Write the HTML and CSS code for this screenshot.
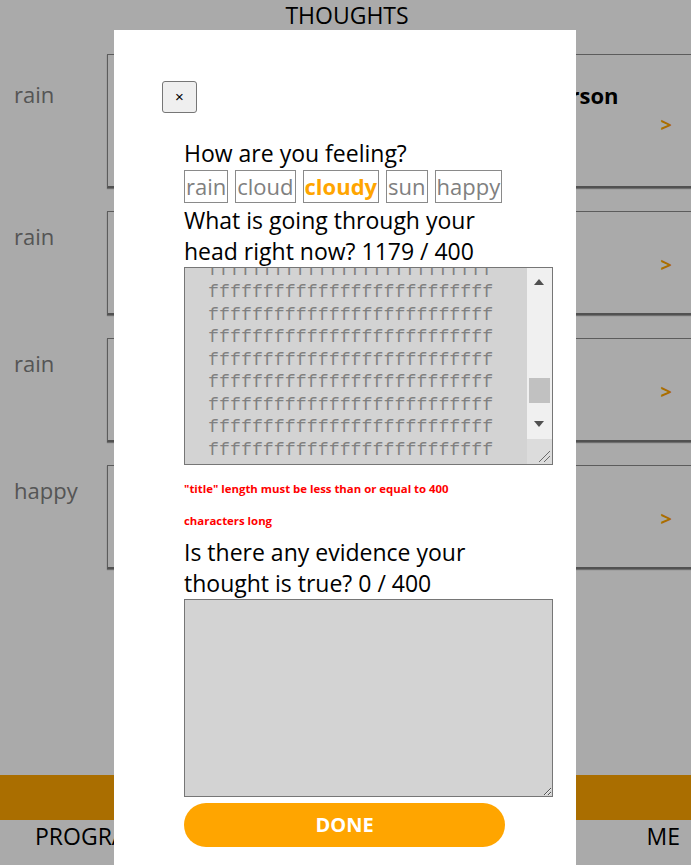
FILE: index.html
```html
<!DOCTYPE html>
<html lang="en">
<head>
<meta charset="utf-8">
<title>Thoughts</title>
<link rel="stylesheet" href="styles.css">
</head>
<body>
<div class="app">
  <header class="page-title">THOUGHTS</header>
  <main class="list">
    <div class="row row-first">
      <span class="mood">rain</span>
      <div class="card card-tall">
        <div class="card-body"><span class="card-title">Talking to a new person</span></div>
        <span class="chev">&gt;</span>
      </div>
    </div>
    <div class="row">
      <span class="mood">rain</span>
      <div class="card">
        <div class="card-body"></div>
        <span class="chev">&gt;</span>
      </div>
    </div>
    <div class="row">
      <span class="mood">rain</span>
      <div class="card">
        <div class="card-body"></div>
        <span class="chev">&gt;</span>
      </div>
    </div>
    <div class="row">
      <span class="mood">happy</span>
      <div class="card">
        <div class="card-body"></div>
        <span class="chev">&gt;</span>
      </div>
    </div>
  </main>
  <div class="accent-bar"></div>
  <nav class="nav">
    <span class="nav-item">PROGRAMS</span>
    <span class="nav-item">ME</span>
  </nav>
</div>

<div class="overlay"></div>

<div class="modal">
  <button class="close-btn" type="button">&times;</button>
  <form class="form">
    <div class="q q-first">How are you feeling?</div>
    <div class="moods">
      <button type="button" class="mood-btn">rain</button>
      <button type="button" class="mood-btn">cloud</button>
      <button type="button" class="mood-btn mood-active">cloudy</button>
      <button type="button" class="mood-btn">sun</button>
      <button type="button" class="mood-btn">happy</button>
    </div>
    <div class="q q-gap">What is going through your head right now? 1179 / 400</div>
    <div class="fake-area">
      <div class="fake-text">
        <div class="fline">ffffffffffffffffffffffffff</div>
        <div class="fline">ffffffffffffffffffffffffff</div>
        <div class="fline">ffffffffffffffffffffffffff</div>
        <div class="fline">ffffffffffffffffffffffffff</div>
        <div class="fline">ffffffffffffffffffffffffff</div>
        <div class="fline">ffffffffffffffffffffffffff</div>
        <div class="fline">ffffffffffffffffffffffffff</div>
        <div class="fline">ffffffffffffffffffffffffff</div>
        <div class="fline">ffffffffffffffffffffffffff</div>
      </div>
      <div class="sbar">
        <svg class="arrow arrow-up" width="10" height="6" viewBox="0 0 10 6"><polygon points="0,6 10,6 5,0" fill="#505050"/></svg>
        <div class="thumb"></div>
        <svg class="arrow arrow-down" width="10" height="6" viewBox="0 0 10 6"><polygon points="0,0 10,0 5,6" fill="#505050"/></svg>
      </div>
      <div class="resizer">
        <svg width="25" height="25" viewBox="0 0 25 25"><line x1="12" y1="23" x2="23" y2="12" stroke="#6a6a6a" stroke-width="1"/><line x1="17" y1="23" x2="23" y2="17" stroke="#6a6a6a" stroke-width="1"/></svg>
      </div>
    </div>
    <div class="error">"title" length must be less than or equal to 400 characters long</div>
    <div class="q">Is there any evidence your thought is true? 0 / 400</div>
    <textarea class="area"></textarea>
    <button type="button" class="done">DONE</button>
  </form>
</div>
</body>
</html>
```

FILE: styles.css
```css
* { box-sizing: border-box; }

html, body {
  margin: 0;
  padding: 0;
  height: 100%;
}

body {
  font-family: "Open Sans", "Liberation Sans", sans-serif;
  font-size: 22px;
  line-height: 31px;
  color: #000;
  background: #fff;
  overflow: hidden;
}

.app {
  height: 865px;
  display: flex;
  flex-direction: column;
}

.page-title {
  height: 54px;
  text-align: center;
  font-size: 23px;
  padding-left: 3px;
}

.list {
  flex: 1;
  display: flex;
  flex-direction: column;
  gap: 23px;
}

.row {
  display: flex;
  align-items: stretch;
}

.mood {
  width: 107px;
  flex: none;
  padding-left: 14px;
  padding-top: 10px;
  color: #808080;
}

.row-first .mood { padding-top: 25px; }

.card {
  flex: 1;
  height: 104px;
  display: flex;
  align-items: center;
  border: 1px solid #8a8a8a;
  border-right: none;
  border-bottom: 2px solid #7a7a7a;
  box-shadow: 0 1px 1px rgba(0, 0, 0, 0.35);
  padding-right: 19px;
}

.card-tall {
  height: 134px;
  align-items: flex-start;
}

.card-body {
  flex: 1;
  text-align: right;
  padding-right: 42px;
  white-space: nowrap;
  overflow: hidden;
}

.card-tall .card-body { padding-top: 25px; }

.card-title {
  font-weight: 700;
}

.chev {
  color: #ffa500;
  font-size: 20px;
  font-weight: 700;
  line-height: 20px;
  margin-top: 4px;
}

.card-tall .chev { margin-top: 60px; }

.accent-bar {
  height: 45px;
  background: #ffa500;
  flex: none;
}

.nav {
  height: 45px;
  flex: none;
  display: flex;
  justify-content: space-between;
  padding: 1px 11px 0 35px;
  font-size: 23px;
}

.overlay {
  position: fixed;
  inset: 0;
  background: rgba(0, 0, 0, 0.333);
}

.modal {
  position: fixed;
  top: 30px;
  left: 114px;
  width: 462px;
  bottom: 0;
  background: #fff;
  padding: 51px 0 0 48px;
}

.close-btn {
  display: block;
  width: 35px;
  height: 32px;
  padding: 0;
  background: #efefef;
  border: 1px solid #767676;
  border-radius: 3px;
  font-family: "Liberation Sans", sans-serif;
  font-size: 15px;
  line-height: 28px;
  color: #000;
}

.form {
  margin: 25px 0 0 22px;
  width: 300px;
}

.q {
  font-size: 23px;
  line-height: 31px;
}

.q-gap { margin-top: 2px; }

.moods {
  display: flex;
  gap: 7px;
  margin-top: 1px;
}

.mood-btn {
  flex: none;
  font: inherit;
  line-height: 31px;
  padding: 0 1px;
  border: 1px solid #8a8a8a;
  background: transparent;
  color: #808080;
}

.mood-active {
  color: #ffa500;
  font-weight: 700;
}

.fake-area {
  position: relative;
  width: 369px;
  height: 198px;
  background: #d3d3d3;
  border: 1px solid #767676;
  overflow: hidden;
}

.fake-text {
  margin-top: -9.5px;
  padding-left: 23px;
  font-family: "Liberation Mono", monospace;
  font-size: 18.3px;
  line-height: 22.5px;
  color: #808080;
  white-space: nowrap;
}

.sbar {
  position: absolute;
  top: 0;
  right: 0;
  width: 25px;
  height: 171px;
  background: #f0f0f0;
}

.arrow {
  position: absolute;
  left: 7px;
}

.arrow-up { top: 11px; }
.arrow-down { top: 153px; }

.thumb {
  position: absolute;
  left: 2px;
  top: 110px;
  width: 21px;
  height: 25px;
  background: #c1c1c1;
}

.resizer {
  position: absolute;
  right: 0;
  bottom: 0;
  width: 25px;
  height: 25px;
  background: #dcdcdc;
}

.resizer svg { display: block; }

.error {
  margin-top: 8px;
  color: #ff0000;
  font-size: 11.4px;
  font-weight: 700;
  line-height: 32px;
}

.area {
  display: block;
  width: 369px;
  height: 198px;
  margin: 0;
  background: #d3d3d3;
  border: 1px solid #767676;
  font: inherit;
}

.done {
  display: block;
  margin-top: 6px;
  width: 321px;
  height: 44px;
  border: none;
  border-radius: 22px;
  background: #ffa500;
  color: #fff;
  font-family: "Open Sans", "Liberation Sans", sans-serif;
  font-size: 20px;
  font-weight: 700;
  line-height: 44px;
  padding: 0;
}
```
